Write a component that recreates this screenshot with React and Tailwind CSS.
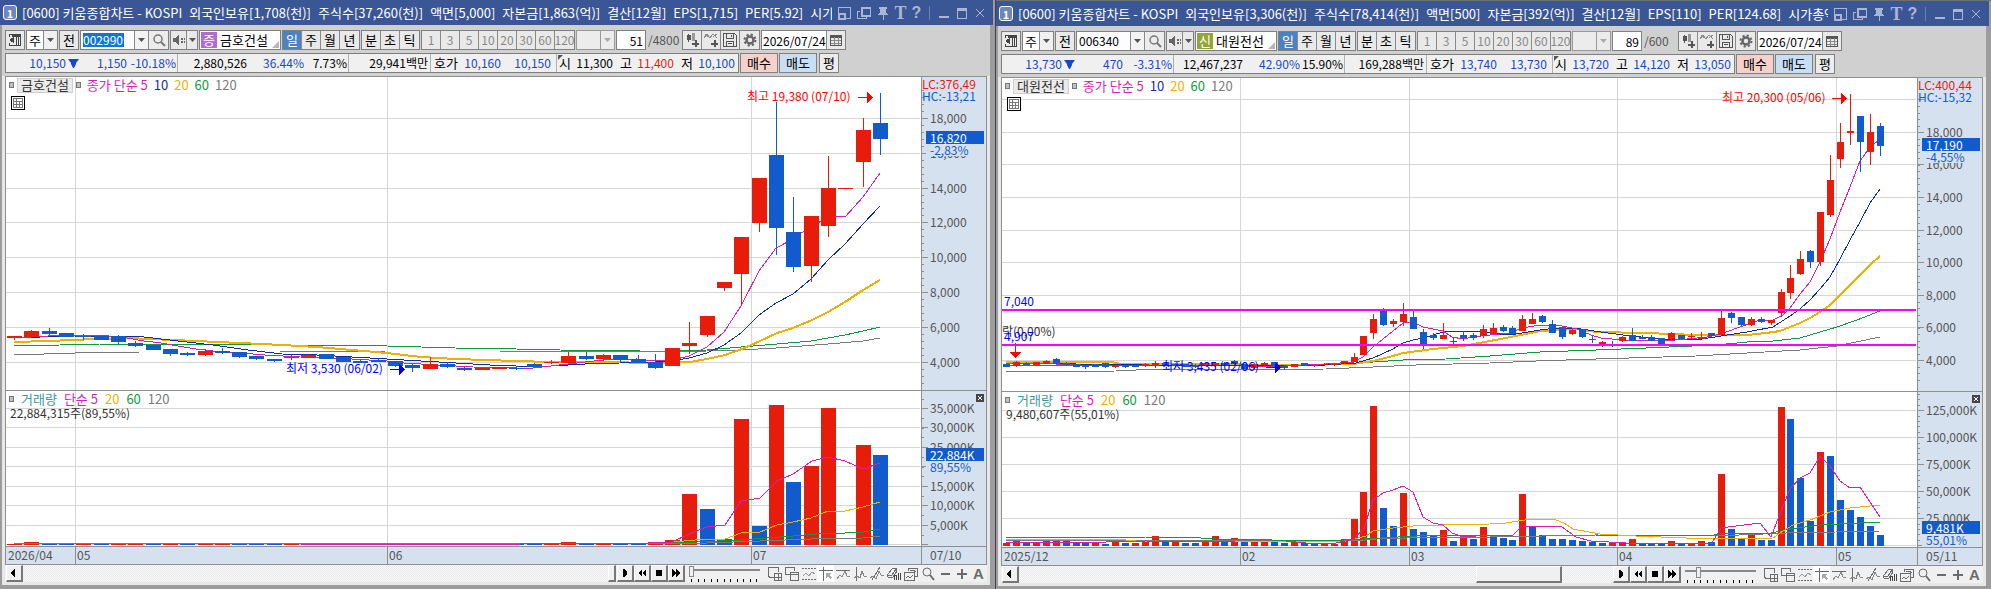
import clsx from 'clsx';

const UP = '#e81c0a';
const DOWN = '#125bcc';
const MA = { 5: '#d61fb4', 10: '#0f2fa8', 20: '#f0b000', 60: '#109a3e', 120: '#7b7b7b' };

const PLOT = { x: 6, width: 915 };
const PRICE = { y: 77, height: 313 };
const VOLUME = { y: 391, height: 155 };

const leftPct = (x) => `${((x - PLOT.x) / PLOT.width) * 100}%`;

// candle: [rising, bodyTop, bodyBottom, high, low]
// volume: [rising, top]
const kumho = {
  name: '금호건설',
  badge: '증',
  badgeClass: 'bg-[#b56ad0]',
  code: '002990',
  codeSelected: true,
  count: '51',
  total: '/4800',
  date: '2026/07/24',
  title: ['[0600] 키움종합차트 - KOSPI', '외국인보유[1,708(천)]', '주식수[37,260(천)]', '액면[5,000]', '자본금[1,863(억)]', '결산[12월]', 'EPS[1,715]', 'PER[5.92]', '시가총액'],
  quote: {
    price: '10,150', change: '1,150', changePct: '-10.18%',
    volume: '2,880,526', volPct: '36.44%', turnover: '7.73%',
    amount: '29,941백만', ask: '10,160', bid: '10,150',
    open: '11,300', high: '11,400', low: '10,100',
    openClass: 'text-black', highClass: 'text-[#e81c0a]', lowClass: 'text-[#1848c8]',
  },
  first: 7, step: 17.32, barWidth: 15,
  verticals: [75, 387, 751],
  months: [{ x: 75, label: '05' }, { x: 387, label: '06' }, { x: 751, label: '07' }],
  firstMonth: '2026/04',
  lastDay: '07/10',
  priceTicks: [[118, '18,000'], [153, '16,000'], [188, '14,000'], [222, '12,000'], [257, '10,000'], [292, '8,000'], [327, '6,000'], [362, '4,000']],
  priceMinor: { from: 90, to: 385, step: 6.97 },
  volumeTicks: [[408, '35,000K'], [427, '30,000K'], [447, '25,000K'], [466, ''], [486, '15,000K'], [505, '10,000K'], [525, '5,000K'], [544, '']],
  volumeMinor: { from: 398.5, to: 540, step: 9.72 },
  lc: 'LC:376,49', hc: 'HC:-13,21',
  lastPrice: { y: 131, value: '16,820', pct: '-2,83%' },
  lastVolume: { y: 448, value: '22,884K', pct: '89,55%' },
  volumeText: '22,884,315주(89,55%)',
  thumb: { left: '98.6%', width: '1.4%' },
  speed: 0,
  levels: [],
  notes: [
    { x: 747, y: 96, text: '최고 19,380 (07/10)', className: 'text-[#ff0000]' },
    { x: 286, y: 368, text: '최저 3,530 (06/02)', className: 'text-[#0000ff]' },
  ],
  arrows: [{ x: 858, y: 97, color: '#ff0000' }, { x: 390, y: 369, color: '#0000ff' }],
  candles: [
    [1, 336, 338, 336, 340], [1, 331, 337, 330, 337], [0, 331, 334, 328, 335], [0, 333, 337, 333, 337], [0, 336, 337, 334, 340],
    [0, 336, 340, 336, 340], [0, 336, 342, 335, 344], [0, 343, 346, 341, 347], [0, 345, 350, 345, 350], [0, 349, 354, 349, 356],
    [0, 353, 355, 352, 356], [1, 351, 355, 349, 356], [0, 351, 353, 348, 354], [0, 352, 357, 352, 358], [0, 356, 359, 356, 360],
    [0, 359, 361, 359, 362], [1, 357, 358, 355, 360], [1, 355, 358, 354, 358], [0, 354, 359, 354, 359], [0, 357, 362, 357, 362],
    [0, 361, 363, 359, 363], [0, 360, 362, 359, 362], [0, 361, 366, 361, 367], [0, 365, 368, 364, 372], [1, 364, 369, 357, 369],
    [0, 364, 367, 362, 368], [0, 368, 370, 367, 371], [1, 368, 370, 367, 370], [1, 367, 369, 367, 369], [0, 368, 369, 366, 370],
    [0, 364, 367, 363, 367], [1, 362, 363, 360, 364], [1, 356, 363, 352, 363], [0, 356, 359, 352, 360], [1, 355, 359, 354, 361],
    [0, 355, 360, 355, 363], [0, 359, 363, 355, 363], [0, 362, 368, 354, 369], [1, 348, 366, 348, 366], [1, 343, 346, 322, 354],
    [1, 316, 335, 316, 337], [1, 282, 288, 282, 291], [1, 237, 274, 237, 306], [1, 178, 223, 178, 232], [0, 155, 228, 102, 255],
    [0, 232, 267, 197, 272], [1, 216, 266, 216, 282], [1, 188, 226, 156, 237], [1, 188, 189, 188, 189], [1, 130, 162, 118, 187],
    [0, 123, 139, 93, 155],
  ],
  volumes: [
    [1, 544], [1, 542], [0, 544], [0, 544], [1, 544], [0, 544], [1, 544], [1, 544], [0, 544], [1, 544],
    [0, 544], [1, 544], [1, 544], [0, 544], [0, 544], [0, 544], [1, 544], [1, 544], [0, 544], [0, 544],
    [0, 544], [1, 544], [1, 544], [0, 544], [1, 544], [0, 544], [1, 544], [1, 544], [0, 544], [0, 544],
    [0, 544], [1, 544], [1, 542], [0, 544], [1, 544], [0, 544], [0, 544], [1, 542], [1, 540], [1, 494],
    [0, 509], [0, 539], [1, 419], [0, 526], [1, 405], [0, 482], [1, 466], [1, 408], [1, 545], [1, 445],
    [0, 455],
  ],
  priceLines: {
    120: '14,355 75,353 140,352 280,352 387,351 500,351 640,351 663,352 707,351 741,350 776,348 828,344 863,341 880,338',
    60: '14,346 60,345 100,344 200,344 290,345 387,346 455,348 516,349 560,350 640,351 672,351 707,350 741,347 777,344 811,341 828,338 845,335 863,331 880,327',
    20: '14,342 48,341 96,339 127,338 150,339 196,341 240,343 282,345 317,347 352,350 387,353 421,357 456,359 516,361 551,362 603,362 655,363 690,362 707,359 725,355 742,349 760,341 777,333 793,328 812,320 828,312 845,302 863,290 880,280',
    10: '14,338 40,337 75,336 110,336 144,337 178,341 213,345 248,350 282,354 317,355 352,357 387,359 421,361 456,363 490,365 516,366 551,366 585,364 620,363 655,362 672,361 689,358 707,353 724,345 741,333 759,315 776,303 793,294 811,279 828,260 845,244 863,224 880,206',
    5: '14,338 31,337 48,336 75,335 92,335 109,336 127,338 144,341 161,343 178,346 196,349 213,351 230,352 265,355 300,357 334,358 369,360 387,361 404,363 438,365 473,367 516,368 533,368 551,366 568,364 603,360 637,359 655,361 672,360 689,356 707,347 724,332 741,306 759,271 776,248 793,239 811,226 828,218 837,216 845,217 863,197 880,173',
  },
  volumeLines: {
    5: '302,544 386,544 520,544 650,543 672,542 689,534 707,527 725,525 741,501 760,498 777,481 793,474 812,461 828,457 845,461 863,469 880,463',
    20: '672,542 707,539 725,539 741,533 760,532 777,525 793,522 811,518 828,511 845,511 863,507 880,502',
    60: '672,543 741,540 793,536 828,533 845,533 863,532 880,529',
    120: '14,543 707,543 760,541 811,539 863,538 880,536',
  },
};

const daewon = {
  name: '대원전선',
  badge: '신',
  badgeClass: 'bg-[#94a436]',
  code: '006340',
  codeSelected: false,
  count: '89',
  total: '/600',
  date: '2026/07/24',
  title: ['[0600] 키움종합차트 - KOSPI', '외국인보유[3,306(천)]', '주식수[78,414(천)]', '액면[500]', '자본금[392(억)]', '결산[12월]', 'EPS[110]', 'PER[124.68]', '시가총액['],
  quote: {
    price: '13,730', change: '470', changePct: '-3.31%',
    volume: '12,467,237', volPct: '42.90%', turnover: '15.90%',
    amount: '169,288백만', ask: '13,740', bid: '13,730',
    open: '13,720', high: '14,120', low: '13,050',
    openClass: 'text-[#1848c8]', highClass: 'text-[#1848c8]', lowClass: 'text-[#1848c8]',
  },
  first: 7, step: 9.93, barWidth: 7,
  verticals: [244, 413, 621, 840],
  months: [{ x: 244, label: '02' }, { x: 413, label: '03' }, { x: 621, label: '04' }, { x: 840, label: '05' }],
  firstMonth: '2025/12',
  lastDay: '05/11',
  priceTicks: [[98, ''], [131, '18,000'], [163, '16,000'], [196, '14,000'], [229, '12,000'], [261, '10,000'], [294, '8,000'], [326, '6,000'], [359, '4,000']],
  priceMinor: { from: 105, to: 385, step: 6.52 },
  volumeTicks: [[409, '125,000K'], [436, '100,000K'], [463, '75,000K'], [490, '50,000K'], [517, '25,000K'], [544, '']],
  volumeMinor: { from: 393, to: 543, step: 5.4 },
  lc: 'LC:400,44', hc: 'HC:-15,32',
  lastPrice: { y: 137, value: '17,190', pct: '-4,55%' },
  lastVolume: { y: 520, value: '9,481K', pct: '55,01%' },
  volumeText: '9,480,607주(55,01%)',
  thumb: { left: '77%', width: '14.5%' },
  speed: 16,
  levels: [308, 343],
  notes: [
    { x: 726, y: 96, text: '최고 20,300 (05/06)', className: 'text-[#ff0000]' },
    { x: 166, y: 365, text: '최저 3,435 (02/06)', className: 'text-[#0000ff]' },
    { x: 6, y: 330, text: '락(0,00%)', className: 'text-[#333333]' },
    { x: 8, y: 335, text: '4,907', className: 'text-[#0000ff]' },
    { x: 8, y: 300, text: '7,040', className: 'text-[#0000ff]' },
  ],
  arrows: [{ x: 836, y: 97, color: '#ff0000' }, { x: 270, y: 366, color: '#0000ff' }, { x: 19, y: 342, color: '#ff0000', down: true }],
  candles: [
    [0, 363, 366, 363, 366], [1, 361, 365, 360, 366], [0, 362, 364, 361, 364], [1, 361, 364, 361, 365], [1, 360, 363, 359, 363],
    [0, 358, 363, 357, 363], [0, 362, 364, 361, 365], [0, 363, 366, 363, 366], [0, 364, 366, 364, 368], [0, 363, 366, 363, 366],
    [0, 362, 366, 362, 367], [1, 364, 366, 364, 367], [0, 364, 366, 364, 367], [0, 364, 366, 364, 366], [1, 363, 365, 362, 366],
    [1, 362, 365, 360, 367], [0, 362, 364, 361, 365], [0, 363, 365, 362, 366], [0, 363, 366, 363, 366], [0, 364, 366, 363, 367],
    [1, 362, 364, 361, 365], [1, 362, 365, 361, 366], [0, 362, 364, 361, 365], [0, 360, 363, 359, 364], [0, 363, 368, 363, 368],
    [1, 363, 367, 362, 368], [1, 362, 364, 361, 365], [0, 361, 365, 361, 366], [0, 365, 367, 364, 369], [1, 363, 366, 363, 366],
    [0, 362, 365, 362, 365], [1, 364, 365, 363, 366], [1, 363, 364, 362, 365], [1, 363, 364, 362, 365], [1, 360, 362, 360, 363],
    [1, 356, 361, 352, 361], [1, 335, 354, 335, 354], [1, 318, 332, 313, 338], [0, 310, 324, 307, 325], [1, 320, 323, 318, 326],
    [1, 313, 321, 302, 325], [0, 316, 328, 310, 328], [0, 331, 343, 328, 348], [0, 334, 337, 332, 339], [1, 334, 338, 322, 338],
    [0, 340, 341, 336, 343], [0, 334, 337, 330, 340], [0, 334, 337, 332, 339], [1, 328, 335, 324, 337], [1, 327, 333, 322, 333],
    [0, 326, 330, 324, 331], [0, 327, 333, 325, 333], [1, 318, 330, 314, 330], [1, 318, 323, 312, 323], [0, 315, 321, 314, 322],
    [0, 323, 332, 319, 332], [0, 326, 336, 326, 338], [1, 329, 333, 328, 334], [0, 328, 336, 328, 337], [0, 338, 339, 335, 342],
    [1, 341, 343, 340, 346], [0, 343, 344, 340, 346], [1, 336, 340, 335, 341], [0, 334, 340, 327, 340], [0, 336, 338, 334, 338],
    [0, 336, 340, 334, 340], [0, 337, 343, 337, 343], [1, 332, 338, 331, 339], [0, 334, 338, 334, 338], [1, 335, 336, 332, 338],
    [1, 336, 338, 331, 338], [0, 332, 335, 332, 335], [1, 317, 334, 309, 334], [0, 312, 317, 311, 322], [0, 316, 324, 316, 325],
    [1, 318, 324, 316, 325], [0, 318, 321, 316, 322], [1, 319, 322, 319, 324], [1, 291, 312, 288, 316], [1, 277, 292, 264, 298],
    [1, 258, 273, 250, 274], [0, 250, 261, 249, 267], [1, 211, 261, 211, 265], [1, 179, 214, 154, 216], [1, 141, 158, 122, 167],
    [1, 130, 132, 93, 144], [0, 115, 141, 115, 171], [1, 131, 151, 113, 164], [0, 125, 145, 122, 155],
  ],
  volumes: [
    [1, 542], [1, 540], [0, 542], [1, 542], [1, 540], [1, 540], [0, 540], [0, 542], [0, 542], [1, 541],
    [0, 543], [1, 540], [0, 542], [1, 542], [1, 541], [1, 535], [0, 540], [1, 540], [0, 542], [0, 542],
    [1, 541], [1, 535], [0, 538], [1, 537], [0, 540], [1, 541], [1, 541], [0, 540], [0, 542], [1, 540],
    [0, 542], [0, 543], [1, 543], [1, 543], [1, 538], [1, 518], [1, 491], [1, 405], [0, 507], [0, 525],
    [1, 492], [0, 528], [0, 531], [0, 534], [1, 529], [0, 540], [1, 536], [0, 538], [1, 526], [0, 534],
    [0, 537], [0, 539], [1, 493], [0, 525], [0, 534], [0, 538], [0, 538], [0, 539], [0, 540], [0, 541],
    [0, 542], [1, 542], [1, 541], [1, 538], [0, 542], [0, 542], [0, 542], [1, 540], [0, 542], [1, 542],
    [1, 540], [0, 541], [1, 473], [0, 528], [0, 538], [1, 534], [0, 539], [0, 539], [1, 406], [0, 418],
    [0, 477], [0, 520], [1, 451], [0, 455], [0, 499], [0, 509], [0, 516], [0, 525], [0, 534],
  ],
  priceLines: {
    120: '10,371 120,370 140,369 330,368 377,366 420,364 494,362 540,360 600,358 700,355 751,352 804,349 841,345 884,336',
    60: '10,365 130,364 250,364 358,363 377,361 407,359 450,358 494,355 544,351 600,349 650,347 720,344 751,341 777,340 804,337 824,331 841,326 861,319 884,310',
    20: '10,361 115,361 125,363 200,363 300,364 358,363 377,360 397,355 407,352 437,348 467,345 494,340 520,335 544,330 580,328 600,331 650,332 700,334 751,334 770,332 784,330 794,326 804,322 814,317 824,311 834,304 844,294 854,284 864,274 874,264 884,255',
    10: '10,362 80,363 150,364 250,365 330,364 360,362 377,357 397,348 407,342 417,339 427,337 447,331 460,330 477,330 494,332 514,334 544,329 560,327 585,328 605,331 627,334 645,336 667,338 700,339 725,335 751,331 777,326 794,315 804,308 814,299 824,288 834,276 844,258 854,239 864,221 874,202 884,188',
    5: '10,363 40,362 80,364 150,365 250,365 290,365 330,363 358,361 367,356 377,346 387,338 397,330 407,322 417,321 427,326 447,330 456,336 467,338 477,336 494,334 514,332 526,327 544,324 566,325 581,328 595,334 605,337 627,339 667,340 691,338 711,336 725,333 741,327 761,320 777,319 787,314 794,307 804,293 814,281 824,261 834,238 844,211 854,186 864,160 874,146 882,140',
  },
  volumeLines: {
    5: '10,541 60,541 110,541 150,540 190,541 240,540 290,540 310,542 340,542 358,538 368,527 377,499 387,492 397,489 407,485 417,491 427,516 437,522 447,524 456,532 467,536 494,534 517,534 526,525 566,526 580,536 595,540 630,542 716,542 725,527 740,525 764,522 775,536 785,510 794,488 804,477 814,472 824,455 834,465 844,480 854,487 864,486 884,516',
    20: '10,538 120,538 150,541 300,540 350,540 370,535 377,530 397,527 417,525 447,524 494,523 510,522 535,518 560,519 568,522 577,528 604,533 640,535 715,538 777,537 787,530 797,524 814,519 834,511 854,507 884,504',
    60: '10,536 85,536 110,537 150,536 190,536 220,538 330,540 367,538 420,535 494,534 600,534 718,534 730,532 775,532 794,528 824,524 864,522 884,521',
    120: '10,539 290,539 358,540 380,538 440,536 494,536 600,534 720,535 790,532 840,531 884,530',
  },
};

function Glyph({ size = 14, className, children }) {
  return (
    <svg
      width={size}
      height={size}
      viewBox="0 0 14 14"
      fill="none"
      stroke="currentColor"
      shapeRendering="crispEdges"
      aria-hidden="true"
      className={clsx('block shrink-0', className)}
    >
      {children}
    </svg>
  );
}

function DownArrow({ className }) {
  return (
    <svg width="7" height="4" viewBox="0 0 7 4" fill="currentColor" aria-hidden="true" className={clsx('block', className)}>
      <path d="M0 0H7L3.5 4Z" />
    </svg>
  );
}

// Title bar
function TitleIcon({ label, width = 'w-[20px]', children }) {
  return (
    <button type="button" aria-label={label} className={clsx('flex h-full items-center justify-center', width)}>
      {children}
    </button>
  );
}

function TitleBar({ chart }) {
  return (
    <header className="flex h-[25px] items-center bg-[#3b5694] pr-[4px] pl-[3px] text-white">
      <span className="flex h-[15px] w-[14px] shrink-0 items-center justify-center rounded-[3px] border border-white bg-[#6f86bd] text-[11px] font-bold">
        1
      </span>
      <h2 className="ml-[5px] flex min-w-0 flex-1 gap-[7px] overflow-hidden text-[13px] leading-[25px] whitespace-pre">
        {chart.title.map((part) => (
          <span key={part}>{part}</span>
        ))}
      </h2>
      <div className="ml-[2px] flex h-full shrink-0 items-center text-[#a9b6d6]">
        <TitleIcon label="화면 크기">
          <Glyph>
            <path d="M1 8V1.5H13V12.5H8" strokeWidth="1" />
            <path d="M2 7.5H7.5V12.5H1.5V7.5" strokeWidth="2" />
          </Glyph>
        </TitleIcon>
        <TitleIcon label="화면 복사">
          <Glyph>
            <path d="M4.5 1.5H13.5V9.5H4.5Z" strokeWidth="2" />
            <path d="M3 5.5H0.5V12.5H9.5V10" />
          </Glyph>
        </TitleIcon>
        <TitleIcon label="고정" width="w-[18px]">
          <Glyph>
            <path d="M3 1H11V3H10V6L12 9H2L4 6V3H3Z" fill="currentColor" stroke="none" />
            <path d="M7 9V14" />
          </Glyph>
        </TitleIcon>
        <TitleIcon label="글꼴" width="w-[17px]">
          <span className="font-['Liberation_Serif',serif] text-[18px] leading-none font-bold">T</span>
        </TitleIcon>
        <TitleIcon label="도움말" width="w-[15px]">
          <span className="font-['Liberation_Sans',sans-serif] text-[16px] leading-none font-bold">?</span>
        </TitleIcon>
        <span className="mx-[5px] h-[14px] w-px bg-[#6b80b3]" />
        <TitleIcon label="최소화" width="w-[18px]">
          <Glyph><path d="M2 11H12" strokeWidth="2" /></Glyph>
        </TitleIcon>
        <TitleIcon label="최대화" width="w-[18px]">
          <Glyph>
            <path d="M2.5 2V12.5H11.5V2" />
            <path d="M2 3.5H12" strokeWidth="3" />
          </Glyph>
        </TitleIcon>
        <TitleIcon label="닫기" width="w-[18px]">
          <Glyph><path d="M3 3L11 11M11 3L3 11" /></Glyph>
        </TitleIcon>
      </div>
    </header>
  );
}

// Toolbar
function Group({ className, children }) {
  return (
    <div className={clsx('flex h-[20px] shrink-0 divide-x divide-[#8a8a8a] border border-[#808080] bg-[#e9e9e9]', className)}>
      {children}
    </div>
  );
}

function ToolButton({ label, width = 'w-[19px]', className, children }) {
  return (
    <button type="button" aria-label={label} className={clsx('flex h-full shrink-0 items-center justify-center', width, className)}>
      {children}
    </button>
  );
}

function Toolbar({ chart }) {
  return (
    <div className="flex items-center gap-px text-[13px] whitespace-nowrap">
      <Group>
        <ToolButton label="목록 열기" width="w-[18px]" className="text-[#444]">
          <Glyph>
            <path d="M1.5 4V1.5H12.5V12.5H1.5V10" />
            <path d="M4 2.5H12" strokeWidth="2" />
            <path d="M8.5 2V12M10.5 4V12" />
            <path d="M6 4V10L1 7Z" fill="currentColor" stroke="none" />
          </Glyph>
        </ToolButton>
      </Group>
      <div className="relative h-[20px] w-[32px] shrink-0 border border-[#808080] bg-white">
        <select aria-label="종목 구분" defaultValue="주" className="h-full w-full appearance-none bg-transparent pl-[2px] leading-none outline-none">
          <option>주</option>
        </select>
        <span className="pointer-events-none absolute inset-y-0 right-0 flex w-[14px] items-center justify-center border-l border-[#8a8a8a] bg-[#f0f0f0] text-[#555]">
          <DownArrow />
        </span>
      </div>
      <Group>
        <ToolButton width="w-[18px]">전</ToolButton>
      </Group>
      <Group className="bg-white">
        <div className="flex w-[54px] items-center bg-[#fdfdff] pl-[2px]">
          <input
            aria-label="종목코드"
            defaultValue={chart.code}
            className={clsx('h-[14px] min-w-0 text-[12px] outline-none', chart.codeSelected ? 'w-[41px] bg-[#0a78d7] text-white' : 'w-[50px] text-black')}
          />
        </div>
        <ToolButton label="최근 종목" width="w-[14px]" className="bg-[#f3f3f3] text-[#555]">
          <DownArrow />
        </ToolButton>
        <ToolButton label="종목 검색" width="w-[19px]" className="bg-[#ececec] text-[#777]">
          <Glyph>
            <circle cx="6" cy="6" r="4" strokeWidth="1.5" shapeRendering="auto" />
            <path d="M9 9L13 13" strokeWidth="2" shapeRendering="auto" />
          </Glyph>
        </ToolButton>
      </Group>
      <Group>
        <ToolButton label="소리" width="w-[16px]" className="text-[#666]">
          <Glyph>
            <path d="M1 5H3L7 1V13L3 9H1Z" fill="currentColor" stroke="none" />
            <path d="M9 5.5H13M9 8.5H13" strokeDasharray="2 1" strokeWidth="2" />
          </Glyph>
        </ToolButton>
        <ToolButton label="소리 설정" width="w-[10px]" className="text-[#555]">
          <DownArrow />
        </ToolButton>
      </Group>
      <div className="relative flex h-[20px] w-[82px] shrink-0 items-center border border-[#808080] bg-white pl-px">
        <span className={clsx('flex h-[16px] w-[16px] items-center justify-center text-white', chart.badgeClass)}>{chart.badge}</span>
        <span className="ml-[3px]">{chart.name}</span>
        <svg width="7" height="7" viewBox="0 0 7 7" aria-hidden="true" className="absolute right-px bottom-px">
          <path d="M7 0V7H0Z" fill="#b5b5b5" />
        </svg>
      </div>
      <Group>
        {['일', '주', '월', '년'].map((unit) => (
          <ToolButton key={unit} className={unit === '일' && 'bg-[#4a82c6] text-white'}>{unit}</ToolButton>
        ))}
      </Group>
      <Group>
        {['분', '초', '틱'].map((unit) => (
          <ToolButton key={unit}>{unit}</ToolButton>
        ))}
      </Group>
      <Group className="text-[12px] text-[#888]">
        {['1', '3', '5', '10', '20', '30', '60', '120'].map((n) => (
          <ToolButton key={n}>{n}</ToolButton>
        ))}
      </Group>
      <div className="relative h-[20px] w-[39px] shrink-0 border border-[#999] bg-[#ececec]">
        <select aria-label="사용자 주기" disabled className="h-full w-full appearance-none bg-transparent outline-none" />
        <span className="pointer-events-none absolute inset-y-0 right-0 flex w-[14px] items-center justify-center border-l border-[#999] text-[#aaa]">
          <DownArrow />
        </span>
      </div>
      <input
        aria-label="봉 개수"
        defaultValue={chart.count}
        className="h-[20px] w-[30px] shrink-0 border border-[#808080] bg-[#fdfdff] pr-[2px] text-right text-[12px] outline-none"
      />
      <span className="w-[34px] shrink-0 pl-px text-[12px] text-[#555]">{chart.total}</span>
      <Group>
        <ToolButton label="차트 유형" className="text-[#555]">
          <Glyph>
            <path d="M3.5 1V9" />
            <path d="M3.5 2V7" strokeWidth="4" />
            <path d="M8.5 0V8M8.5 1V6" stroke="#999" strokeWidth="3" />
            <path d="M10.5 7V14M7 10.5H14" strokeWidth="2" />
          </Glyph>
        </ToolButton>
        <ToolButton label="지표 추가" className="text-[#555]">
          <Glyph>
            <path d="M0 5L3 1L6 5L9 1L13 5M1 1L4 4M9 4L13 1" stroke="#888" />
            <path d="M10.5 7V14M7 10.5H14" strokeWidth="2" />
          </Glyph>
        </ToolButton>
        <ToolButton label="저장" className="text-[#555]">
          <Glyph>
            <path d="M0.5 0.5H11.5L13.5 2.5V13.5H0.5Z" />
            <path d="M3.5 1V5.5H10.5V1M8.5 2V4M3.5 13V8.5H10.5V13M5 10.5H9" />
          </Glyph>
        </ToolButton>
        <ToolButton label="설정" className="text-[#666]">
          <Glyph>
            <g shapeRendering="auto">
              <circle cx="7" cy="7" r="3.5" strokeWidth="2.5" />
              <circle cx="7" cy="7" r="5.5" strokeWidth="2" strokeDasharray="2.2 2.12" />
            </g>
          </Glyph>
        </ToolButton>
      </Group>
      <Group>
        <input aria-label="기준일" defaultValue={chart.date} className="h-full w-[65px] bg-white pl-px text-[12px] outline-none" />
        <ToolButton label="달력" width="w-[18px]" className="text-[#555]">
          <Glyph>
            <path d="M1.5 3.5H12.5V12.5H1.5Z" />
            <path d="M1 3H13" strokeWidth="3" />
            <path d="M5.5 4V12M9.5 4V12M2 7.5H12M2 10.5H12" stroke="#888" />
          </Glyph>
        </ToolButton>
      </Group>
    </div>
  );
}

function QuoteRow({ quote }) {
  return (
    <div className="flex h-[20px] gap-px text-[12px] whitespace-nowrap text-[#1848c8]">
      <div className="flex shrink-0 divide-x divide-[#b0b0b0] border border-[#7e7e7e] bg-[#f0f0f0]">
        <div className="flex w-[172px] items-center">
          <span className="w-[60px] text-right">{quote.price}</span>
          <svg width="11" height="9" viewBox="0 0 11 9" aria-label="하락" className="ml-[2px]">
            <path d="M0 0H11L8 4V5L6 9H5L3 5V4Z" fill="currentColor" />
          </svg>
          <span className="w-[48px] text-right">{quote.change}</span>
          <span className="w-[49px] text-right">{quote.changePct}</span>
        </div>
        <div className="flex w-[171px] items-center">
          <span className="w-[69px] text-right text-black">{quote.volume}</span>
          <span className="w-[57px] text-right">{quote.volPct}</span>
          <span className="w-[43px] text-right text-black">{quote.turnover}</span>
        </div>
        <div className="flex w-[82px] items-center justify-end pr-[2px] text-black">{quote.amount}</div>
        <div className="flex w-[126px] items-center pl-[3px]">
          <span className="text-[13px] text-black">호가</span>
          <span className="w-[43px] text-right">{quote.ask}</span>
          <span className="w-[50px] text-right">{quote.bid}</span>
        </div>
        <div className="relative flex w-[181px] items-center pl-[2px] text-black">
          <svg width="5" height="5" viewBox="0 0 5 5" aria-hidden="true" className="absolute top-px left-px">
            <path d="M0 0H5L0 5Z" fill="#555" />
          </svg>
          <span className="text-[13px]">시</span>
          <span className={clsx('w-[42px] text-right', quote.openClass)}>{quote.open}</span>
          <span className="ml-[7px] text-[13px]">고</span>
          <span className={clsx('w-[42px] text-right', quote.highClass)}>{quote.high}</span>
          <span className="ml-[7px] text-[13px]">저</span>
          <span className={clsx('w-[42px] text-right', quote.lowClass)}>{quote.low}</span>
        </div>
      </div>
      <button type="button" className="w-[38px] shrink-0 border border-[#808080] bg-[#f6d0ca] text-[13px] text-black">매수</button>
      <button type="button" className="w-[38px] shrink-0 border border-[#808080] bg-[#c8def4] text-[13px] text-black">매도</button>
      <button type="button" className="ml-px w-[20px] shrink-0 border border-[#808080] bg-[#ececec] text-[13px] text-black">평</button>
    </div>
  );
}

// Chart drawing
function Averages({ lines, boldTwenty }) {
  return [120, 60, 20, 10, 5]
    .filter((period) => lines[period])
    .map((period) => (
      <polyline
        key={period}
        points={lines[period]}
        fill="none"
        stroke={MA[period]}
        strokeWidth={period === 20 && boldTwenty ? 2 : 1}
      />
    ));
}

function Grid({ ticks, verticals, y, height }) {
  return (
    <g fill="#d6d6d6">
      {ticks.map(([ty]) => (
        <rect key={ty} x={PLOT.x} y={ty} width={PLOT.width - 1} height="1" />
      ))}
      {verticals.map((x) => (
        <rect key={x} x={x} y={y} width="1" height={height} />
      ))}
    </g>
  );
}

function Arrow({ x, y, color, down }) {
  return (
    <g fill={color}>
      {down ? (
        <>
          <rect x={x} y={y} width="1" height="10" />
          <path d={`M${x - 5} ${y + 9}H${x + 6}L${x + 1} ${y + 15}H${x}Z`} />
        </>
      ) : (
        <>
          <rect x={x} y={y} width="10" height="1" />
          <path d={`M${x + 9} ${y - 5}V${y + 6}L${x + 15} ${y + 1}V${y}Z`} />
        </>
      )}
    </g>
  );
}

function Marker() {
  return <span className="h-[6px] w-[5px] shrink-0 border border-[#777] bg-[#c0c0c0]" />;
}

function PricePlot({ chart }) {
  const { first, step, barWidth } = chart;
  return (
    <div className="relative min-w-0 flex-1 overflow-hidden bg-white">
      <svg
        viewBox={`${PLOT.x} ${PRICE.y} ${PLOT.width} ${PRICE.height}`}
        preserveAspectRatio="none"
        shapeRendering="crispEdges"
        className="block h-[313px] w-full"
      >
        <Grid ticks={chart.priceTicks} verticals={chart.verticals} {...PRICE} />
        <Averages lines={chart.priceLines} boldTwenty />
        {chart.candles.map(([rising, top, bottom, high, low], i) => {
          const x = Math.round(first + step * i);
          return (
            <g key={i} fill={rising ? UP : DOWN}>
              <rect x={x + (barWidth - 1) / 2} y={high} width="1" height={low - high} />
              <rect x={x} y={top} width={barWidth} height={bottom - top} />
            </g>
          );
        })}
        {chart.levels.map((y) => (
          <rect key={y} x={PLOT.x} y={y} width={PLOT.width - 1} height="2" fill="#ff00ff" />
        ))}
        {chart.arrows.map((arrow) => (
          <Arrow key={`${arrow.x}-${arrow.y}`} {...arrow} />
        ))}
      </svg>
      {chart.notes.map((note) => (
        <span
          key={note.text}
          className={clsx('absolute -translate-y-1/2 leading-[14px] whitespace-nowrap', note.className)}
          style={{ left: leftPct(note.x), top: note.y - PRICE.y }}
        >
          {note.text}
        </span>
      ))}
      <div className="absolute top-0 left-[3px] flex h-[16px] items-center gap-[3px] text-[13px] whitespace-nowrap">
        <Marker />
        <span className="flex h-[15px] items-center border border-[#cfcfcf] bg-[#ebebeb] px-[3px] text-[#333]">{chart.name}</span>
        <Marker />
        <span className="ml-[3px] text-[#d61fb4]">종가 단순 5</span>
        <span className="ml-[3px] text-[#0f2fa8]">10</span>
        <span className="ml-[3px] text-[#f0b000]">20</span>
        <span className="ml-[3px] text-[#109a3e]">60</span>
        <span className="ml-[3px] text-[#7b7b7b]">120</span>
      </div>
      <button type="button" aria-label="시세표" className="absolute top-[19px] left-[5px] border border-black bg-white p-px text-[#777]">
        <svg width="10" height="10" viewBox="0 0 10 10" fill="none" stroke="currentColor" shapeRendering="crispEdges" className="block">
          <path d="M0.5 0.5H9.5V9.5H0.5ZM0 3.5H10M0 6.5H10M3.5 0V10M6.5 3V10" />
        </svg>
      </button>
    </div>
  );
}

function VolumePlot({ chart }) {
  const { first, step, barWidth } = chart;
  return (
    <div className="relative min-w-0 flex-1 overflow-hidden bg-white">
      <svg
        viewBox={`${PLOT.x} ${VOLUME.y} ${PLOT.width} ${VOLUME.height}`}
        preserveAspectRatio="none"
        shapeRendering="crispEdges"
        className="block h-[155px] w-full"
      >
        <Grid ticks={chart.volumeTicks} verticals={chart.verticals} {...VOLUME} />
        {chart.volumes.map(([rising, top], i) => (
          <rect key={i} x={Math.round(first + step * i)} y={top} width={barWidth} height={545 - top} fill={rising ? UP : DOWN} />
        ))}
        <Averages lines={chart.volumeLines} />
      </svg>
      <div className="absolute top-0 left-[3px] flex h-[15px] items-center gap-[7px] text-[13px] whitespace-nowrap">
        <Marker />
        <span className="text-[#3a9a97]">거래량</span>
        <span className="text-[#d61fb4]">단순 5</span>
        <span className="text-[#f0b000]">20</span>
        <span className="text-[#109a3e]">60</span>
        <span className="text-[#7b7b7b]">120</span>
      </div>
      <div className="absolute top-[14px] left-[4px] leading-[15px] whitespace-nowrap text-[#333]">{chart.volumeText}</div>
    </div>
  );
}

function Ruler({ ticks, minor, top, height }) {
  const marks = [];
  for (let y = minor.from; y < minor.to; y += minor.step) marks.push(Math.round(y));
  return (
    <svg width="7" height={height} viewBox={`0 ${top} 7 ${height}`} fill="#8f8f8f" shapeRendering="crispEdges" className="block">
      {marks.map((y) => (
        <rect key={`m${y}`} x="0" y={y} width="2" height="1" />
      ))}
      {ticks.map(([y]) => (
        <rect key={`t${y}`} x="0" y={y} width="6" height="1" />
      ))}
    </svg>
  );
}

function ValueAxis({ ticks, minor, last, top, height, children }) {
  return (
    <div className="relative w-[65px] shrink-0 overflow-hidden border-l border-[#8f8f8f] bg-[#d6e1ef] text-[#555]">
      <Ruler ticks={ticks} minor={minor} top={top} height={height} />
      {ticks.map(([y, label]) => (
        <span key={y} className="absolute left-[8px] -translate-y-1/2 leading-[16px]" style={{ top: y - top }}>{label}</span>
      ))}
      <div className="absolute right-[2px] left-[4px] leading-[13px]" style={{ top: last.y - top }}>
        <div className="bg-[#125bcc] pl-[4px] text-white">{last.value}</div>
        <div className="h-[12px] bg-[#d6e1ef] pl-[4px] leading-[12px] text-[#125bcc]">{last.pct}</div>
      </div>
      {children}
    </div>
  );
}

function DateAxis({ chart }) {
  return (
    <div className="flex h-[17px] bg-[#d6e1ef] text-[#555]">
      <div className="relative min-w-0 flex-1 overflow-hidden">
        <span className="absolute left-[2px] leading-[16px]">{chart.firstMonth}</span>
        {chart.months.map((month) => (
          <span
            key={month.label}
            className="absolute inset-y-0 border-l border-[#8f8f8f] pl-px leading-[16px]"
            style={{ left: leftPct(month.x) }}
          >
            {month.label}
          </span>
        ))}
      </div>
      <span className="w-[65px] shrink-0 border-l border-[#8f8f8f] pl-[8px] leading-[16px]">{chart.lastDay}</span>
    </div>
  );
}

// Scroll and tool strip under the chart
function RaisedButton({ label, className, children }) {
  return (
    <button
      type="button"
      aria-label={label}
      className={clsx('flex h-[17px] w-[17px] shrink-0 items-center justify-center border-t border-r-2 border-b-2 border-l border-t-white border-r-[#777] border-b-[#777] border-l-white bg-[#f0f0f0] text-black', className)}
    >
      <svg width="10" height="8" viewBox="0 0 10 8" fill="currentColor" shapeRendering="crispEdges" aria-hidden="true">
        {children}
      </svg>
    </button>
  );
}

function StripButton({ label, active, children }) {
  return (
    <button type="button" aria-label={label} className={clsx('flex h-[17px] w-[17px] shrink-0 items-center justify-center text-[#6b6b6b]', active && 'bg-white')}>
      <Glyph>{children}</Glyph>
    </button>
  );
}

function SpeedSlider({ value }) {
  return (
    <div className="mx-[4px] w-[71px] shrink-0">
      <input
        type="range"
        aria-label="재생 속도"
        defaultValue={value}
        className="block h-[12px] w-full appearance-none bg-[linear-gradient(#888,#888)] bg-[length:100%_2px] bg-[position:0_4px] bg-no-repeat [&::-webkit-slider-thumb]:h-[11px] [&::-webkit-slider-thumb]:w-[5px] [&::-webkit-slider-thumb]:appearance-none [&::-webkit-slider-thumb]:border [&::-webkit-slider-thumb]:border-[#888] [&::-webkit-slider-thumb]:bg-[#f0f0f0]"
      />
      <svg width="71" height="3" viewBox="0 0 71 3" shapeRendering="crispEdges" aria-hidden="true" className="mt-[2px] block">
        {Array.from({ length: 11 }, (_, i) => (
          <rect key={i} x={2 + Math.round(i * 6.5)} y="0" width="1" height="3" fill="#000" />
        ))}
      </svg>
    </div>
  );
}

function BottomStrip({ chart }) {
  return (
    <div className="flex h-[17px] items-start bg-[#f0f0f0] pl-px">
      <RaisedButton label="이전" className="mr-px">
        <path d="M6 0V8H5L2 5V3L5 0Z" />
      </RaisedButton>
      <div className="relative h-full min-w-0 flex-1 bg-[repeating-conic-gradient(#e9e9e9_0_25%,#fafafa_0_50%)] bg-[length:2px_2px]">
        <div
          className="absolute inset-y-0 border-t border-r-2 border-b-2 border-l border-t-white border-r-[#777] border-b-[#777] border-l-white bg-[#f0f0f0]"
          style={chart.thumb}
        />
      </div>
      <RaisedButton label="재생" className="ml-px">
        <path d="M3 0H4L7 3V5L4 8H3Z" />
      </RaisedButton>
      <RaisedButton label="뒤로">
        <path d="M5 0V8L1 4ZM9 0V8L5 4Z" />
      </RaisedButton>
      <RaisedButton label="정지">
        <path d="M2 1H8V7H2Z" />
      </RaisedButton>
      <RaisedButton label="앞으로">
        <path d="M1 0V8L5 4ZM5 0V8L9 4Z" />
      </RaisedButton>
      <SpeedSlider value={chart.speed} />
      <div className="flex shrink-0 pl-[2px]">
        <StripButton label="차트 추가">
          <path d="M6 10.5H2L0.5 9V0.5H10.5V5M6.5 6.5H13.5V13.5H6.5ZM10 6V14M6 10H14" />
        </StripButton>
        <StripButton label="차트 겹침">
          <path d="M5 7.5H0.5V0.5H9.5V4" />
          <path d="M5.5 5.5H13.5V13.5H5.5ZM5 7H14" />
        </StripButton>
        <StripButton label="구간 보기">
          <path d="M0 1.5H14M0 12.5H14" strokeDasharray="2 1" />
          <path d="M1 9L4 6L7 9L10 5L13 7" stroke="#999" />
        </StripButton>
        <StripButton label="십자선" active>
          <path d="M0 3.5H14M4.5 0V14" />
          <path d="M7 6H12L10 8L13 11L11 12L9 9L7 11Z" fill="#aaa" stroke="none" />
        </StripButton>
        <StripButton label="수평선">
          <path d="M0 3.5H14" strokeWidth="1" />
          <path d="M1 12L4 8L6 10L9 4L11 9H14" stroke="#888" />
        </StripButton>
        <StripButton label="수직선">
          <path d="M3.5 0V14" />
          <path d="M1 11L4 9L7 11L9 4L11 9H14" stroke="#888" />
        </StripButton>
        <StripButton label="추세선">
          <path d="M2 13L10 0" />
          <path d="M0 11L3 9L6 12L9 4L11 8H14" stroke="#888" />
        </StripButton>
        <StripButton label="모두 지우기">
          <path d="M0.5 8L5 2L9 1L10 4L6 10H1ZM1 8H5L9 2" />
          <path d="M7.5 13V8H9.5V13M11.5 6V13M13.5 6V13" stroke="#444" />
        </StripButton>
        <StripButton label="차트 저장">
          <path d="M4 4V1.5H13.5V9.5H11" />
          <path d="M0.5 5.5H10.5V13.5H0.5ZM2 11L4 9L6 11L9 8M6 4L9 3L12 5" />
        </StripButton>
        <StripButton label="확대경">
          <g shapeRendering="auto">
            <circle cx="6" cy="5" r="4" />
            <path d="M9 8L13 13" strokeWidth="2" />
          </g>
        </StripButton>
        <StripButton label="축소">
          <path d="M3 7H12" strokeWidth="2" />
        </StripButton>
        <StripButton label="확대">
          <path d="M2 7H12M7 2V12" strokeWidth="2" />
        </StripButton>
        <button type="button" aria-label="자동" className="h-[17px] w-[17px] text-center font-['Liberation_Sans',sans-serif] text-[15px] leading-[17px] font-bold text-[#6b6b6b]">
          A
        </button>
      </div>
    </div>
  );
}

function ChartWindow({ chart, className }) {
  return (
    <section className={clsx('min-w-0 flex-1 overflow-hidden bg-[#9c9c9c] pr-[2px]', className)}>
      <TitleBar chart={chart} />
      <div className="border-r-[3px] border-l-2 border-[#9c9c9c] bg-[#e8e8e8]">
        <div className="flex flex-col gap-[3px] bg-[#d0d0d0] px-[3px] pt-[5px] pb-[3px]">
          <Toolbar chart={chart} />
          <QuoteRow quote={chart.quote} />
        </div>
        <div className="px-[3px] pb-[3px]">
          <div className="border border-[#8f8f8f] text-[12px]">
            <div className="flex h-[313px]">
              <PricePlot chart={chart} />
              <ValueAxis ticks={chart.priceTicks} minor={chart.priceMinor} last={chart.lastPrice} top={PRICE.y} height={PRICE.height}>
                <div className="absolute top-px left-0 leading-[12px]">
                  <div className="text-[#e81c0a]">{chart.lc}</div>
                  <div className="text-[#125bcc]">{chart.hc}</div>
                </div>
              </ValueAxis>
            </div>
            <div className="flex h-[156px] border-t border-[#8f8f8f]">
              <VolumePlot chart={chart} />
              <ValueAxis ticks={chart.volumeTicks} minor={chart.volumeMinor} last={chart.lastVolume} top={VOLUME.y} height={VOLUME.height}>
                <button type="button" aria-label="거래량 닫기" className="absolute top-[3px] right-[2px] bg-[#444] p-[2px] text-white">
                  <svg width="4" height="4" viewBox="0 0 4 4" stroke="currentColor" className="block">
                    <path d="M0 0L4 4M4 0L0 4" />
                  </svg>
                </button>
              </ValueAxis>
            </div>
            <div className="border-t border-[#8f8f8f]">
              <DateAxis chart={chart} />
            </div>
          </div>
          <BottomStrip chart={chart} />
        </div>
      </div>
    </section>
  );
}

export default function App() {
  return (
    <main className="flex gap-px bg-[#3c414c] font-['Noto_Sans_CJK_KR',sans-serif] leading-[16px] text-black">
      <ChartWindow chart={kumho} />
      <ChartWindow chart={daewon} className="border-t border-[#6f6f6f] pb-[3px]" />
    </main>
  );
}
